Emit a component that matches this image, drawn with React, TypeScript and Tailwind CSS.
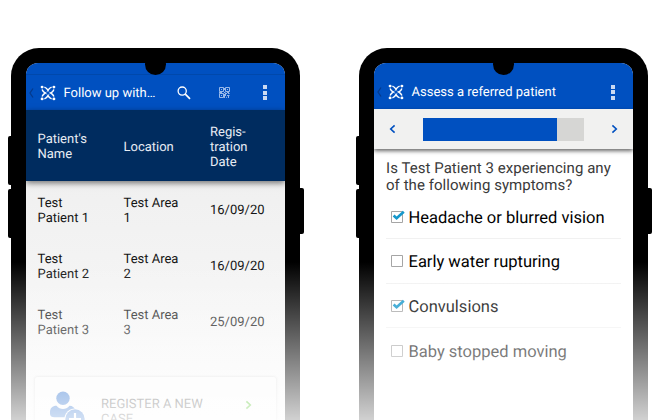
import type { ReactNode } from "react";

function Logo() {
  return (
    <svg viewBox="0 0 16 16" className="size-4 shrink-0" fill="none" stroke="#fff">
      {[0, 90, 180, 270].map((angle) => (
        <g key={angle} transform={`rotate(${angle} 8 8)`}>
          <circle cx="2.1" cy="2.1" r="1.45" fill="#fff" stroke="none" />
          <path d="M4.4 2.1C6 2.7 7.2 3.7 8 5.3 8.8 3.7 10 2.7 11.6 2.1" strokeWidth="1.5" />
          <path d="M8 5.6L6.6 7" strokeWidth=".8" opacity=".55" />
        </g>
      ))}
    </svg>
  );
}

function BackChevron() {
  return (
    <svg viewBox="0 0 6 12" className="h-3 w-1.5 shrink-0" fill="none" stroke="#053a8c" strokeWidth="1.3">
      <path d="M5 1.5L2 6l3 4.5" />
    </svg>
  );
}

function Overflow() {
  return (
    <div className="flex flex-col gap-[1.5px]">
      <span className="size-1 bg-[#c9d9f2]" />
      <span className="size-1 bg-[#c9d9f2]" />
      <span className="size-1 bg-[#c9d9f2]" />
    </div>
  );
}

function SearchIcon() {
  return (
    <svg viewBox="0 0 14 14" className="size-3.5" fill="none" stroke="#fff" strokeWidth="1.3">
      <circle cx="5.2" cy="5.1" r="4.1" />
      <path d="M8.3 8.2L13 12.8" strokeWidth="1.7" />
    </svg>
  );
}

function QrIcon() {
  return (
    <svg viewBox="0 0 11 11" className="size-[11px]" fill="none" stroke="#a9c5ee" strokeWidth=".9">
      <path d="M.5.5h4v4h-4zM6.5.5h4v4h-4zM.5 6.5h4v4h-4z" />
      <path d="M2 2.5h1M8 2.5h1M2 8.5h1M6 6.5h2M9 6.5h1.6M6.5 7v2M8 8.5h2.5M7 10.3h1M9.5 9v2M0 5.5h3M5 5.5h1.5M8 5.5h2M5.5 1v2M5.5 7v4" />
    </svg>
  );
}

function Chevron({ flip = false, color }: { flip?: boolean; color: string }) {
  return (
    <svg viewBox="0 0 7 10" className="h-2.5 w-[7px]" fill="none" stroke={color} strokeWidth="1.6">
      <path d={flip ? "M5.6 1.3L1.7 5l3.9 3.7" : "M1.4 1.3L5.3 5 1.4 8.7"} />
    </svg>
  );
}

function UserAdd() {
  return (
    <svg viewBox="0 0 36 34" className="h-[34px] w-9 shrink-0">
      <circle cx="13" cy="7.2" r="6.7" fill="#0052c4" />
      <path d="M0 21c0-4 2.5-6.3 6.5-6.3 1.8 2.3 4 3.3 6.5 3.3s4.7-1 6.5-3.3c3 0 5.5 2 6.2 5v6.6H4.5C1.8 26.3 0 25 0 23z" fill="#0052c4" />
      <circle cx="25" cy="28" r="10.6" fill="#fff" />
      <circle cx="25" cy="28" r="9.7" fill="#0052c4" />
      <path d="M25 22v12M19 28h12" stroke="#fff" strokeWidth="2.2" />
    </svg>
  );
}

function Phone({ children }: { children: ReactNode }) {
  return (
    <div className="relative h-[372px] w-[289px] shrink-0">
      <span className="absolute top-[88px] -left-[3px] h-[49px] w-2 rounded-l-[2px] bg-black" />
      <span className="absolute top-[141px] -left-[3px] h-[49px] w-2 rounded-l-[2px] bg-black" />
      <span className="absolute top-[140px] -right-[4px] h-[46px] w-2 rounded-r-[2px] bg-black" />
      <div className="h-full rounded-t-[28px] bg-black px-[15px] pt-[15px]">
        <div className="h-full overflow-hidden rounded-t-[12px]">{children}</div>
      </div>
      <span className="absolute top-[5px] left-[134px] h-[22px] w-[21px] rounded-full bg-black" />
      <div className="absolute -inset-x-[6px] top-[214px] bottom-0 bg-linear-to-b from-white/0 to-white/82" />
    </div>
  );
}

const patients = [
  { name: "Patient 1", area: "1", date: "16/09/20" },
  { name: "Patient 2", area: "2", date: "16/09/20" },
  { name: "Patient 3", area: "3", date: "25/09/20" },
];

function PatientList() {
  return (
    <div className="h-full bg-linear-to-b from-[#ececec] to-[#f9f9f9] text-[13px] leading-[15px]">
      <div className="h-[12px] border-b border-[#0048ab] bg-[#0050c0]" />
      <div className="flex h-[35px] items-center bg-[#0050c0] pl-[2px] text-white">
        <BackChevron />
        <div className="ml-[6px]"><Logo /></div>
        <span className="ml-[7.5px] w-[113.5px] pt-[2px]">Follow up with…</span>
        <SearchIcon />
        <div className="ml-[28px]"><QrIcon /></div>
        <div className="ml-[33px]"><Overflow /></div>
      </div>
      <div className="grid h-[71px] grid-cols-[86px_86.5px_1fr] items-center bg-[#002c5f] pt-[3px] pl-[11.5px] text-[#e8edf4] shadow-[0_2px_6px_#0008]">
        <span>Patient's<br />Name</span>
        <span>Location</span>
        <span>Regis-<br />tration<br />Date</span>
      </div>
      {patients.map((p) => (
        <div key={p.name} className="grid h-[56px] grid-cols-[86px_86.5px_1fr] items-center pt-[3px] pl-[11.5px] text-[#151515]">
          <span>Test<br />{p.name}</span>
          <span>Test Area<br />{p.area}</span>
          <span>{p.date}</span>
        </div>
      ))}
      <div className="mx-[9px] mt-[28px] flex h-[70px] rounded-[2px] bg-[#fafafa] pt-[14px] pl-[15px] shadow-[0_0_3px_#0003]">
        <UserAdd />
        <span className="mt-[6px] ml-[15px] w-[144px] text-[#444]">REGISTER A NEW<br />CASE</span>
        <div className="mt-[9px]"><Chevron color="#35b800" /></div>
      </div>
    </div>
  );
}

function Checkbox({ checked }: { checked: boolean }) {
  return (
    <svg viewBox="0 0 15 14" className="h-3.5 w-[15px] shrink-0" fill="none">
      <path d="M.5 1.5h11v11H.5z" stroke="#a5a5a5" />
      {checked && <path d="M2.6 5.5L5.6 8.3 12.8 1.7" stroke="#1598cc" strokeWidth="2.6" />}
    </svg>
  );
}

const symptoms = [
  { label: "Headache or blurred vision", checked: true },
  { label: "Early water rupturing", checked: false },
  { label: "Convulsions", checked: true },
  { label: "Baby stopped moving", checked: false },
];

function Assessment() {
  return (
    <div className="h-full bg-white">
      <div className="flex h-[46px] items-center bg-[#0050c0] pt-[12px] pl-[2px] text-[13px] text-white">
        <BackChevron />
        <div className="ml-[6px]"><Logo /></div>
        <span className="ml-[7.5px] w-[199.5px] pt-[2px]">Assess a referred patient</span>
        <Overflow />
      </div>
      <div className="flex h-[40px] items-center bg-[#f1f1f0] pl-[15px] shadow-[0_2px_4px_#0009]">
        <Chevron flip color="#0050c0" />
        <div className="ml-[27px] h-[23px] w-[161px] bg-[#d6d6d4]">
          <div className="h-full w-[134px] bg-[#0050c0]" />
        </div>
        <div className="ml-[27px]"><Chevron color="#0050c0" /></div>
      </div>
      <p className="mt-[11px] ml-[12px] text-[15px] leading-[17px] tracking-[0.05px] text-[#3a3a3a]">
        Is Test Patient 3 experiencing any<br />of the following symptoms?
      </p>
      <div className="mx-[12px]">
        {symptoms.map((s, i) => (
          <div
            key={s.label}
            className={`flex items-center pl-[5px] pt-px ${i === 0 ? "h-[45px]" : "h-[44.7px]"} ${i < 3 ? "border-b border-[#f1f1f1]" : ""}`}
          >
            <Checkbox checked={s.checked} />
            <span className="ml-[2.5px] pt-[5px] text-[16.5px] text-black">{s.label}</span>
          </div>
        ))}
      </div>
    </div>
  );
}

export default function App() {
  return (
    <div className="flex h-[420px] w-[660px] gap-[59px] overflow-hidden bg-white pt-[48px] pl-[11px] font-[Roboto,sans-serif] [text-rendering:geometricPrecision]">
      <Phone><PatientList /></Phone>
      <Phone><Assessment /></Phone>
    </div>
  );
}
